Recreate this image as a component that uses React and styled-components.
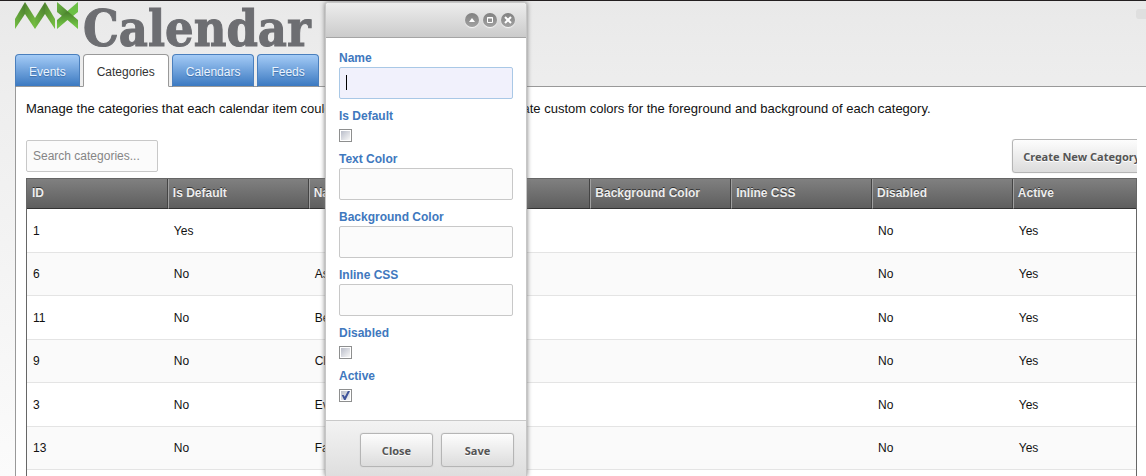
import React from "react";
import styled, { createGlobalStyle, css } from "styled-components";

const GlobalStyle = createGlobalStyle`
  *, *::before, *::after { box-sizing: border-box; }
  body {
    margin: 0;
    font-family: "Liberation Sans", Arial, sans-serif;
    font-size: 12px;
    color: #111;
  }
`;

const Page = styled.div`
  position: relative;
  display: flex;
  flex-direction: column;
  height: 100vh;
  padding-left: 15px;
  overflow: hidden;
  border-top: 1px solid #231f20;
  background: linear-gradient(#e9e9e9, #eeeeee 20%, #fbfbfb);
`;

const Brand = styled.header`
  display: flex;
  align-items: flex-start;
  gap: 4px;
  height: 53px;
`;

const BrandMark = styled.svg`
  display: block;
  flex: none;
`;

const BrandName = styled.h1`
  margin: 0;
  font: bold 50px/56px "DejaVu Serif Condensed", "DejaVu Serif", serif;
  color: #6d6e72;
  -webkit-text-stroke: 1px #6d6e72;
`;

const ToolbarNub = styled.span`
  margin: 8px 0 0 auto;
  width: 10px;
  height: 10px;
  border-radius: 3px 0 0 3px;
  background: #dfdfdf;
`;

const Tabs = styled.nav`
  display: flex;
  gap: 3px;
  margin-bottom: -1px;
  position: relative;
`;

const Tab = styled.a`
  height: 33px;
  padding: 0 13px;
  border: 1px solid #4a7fbd;
  border-bottom-color: #999;
  border-radius: 4px 4px 0 0;
  background: linear-gradient(#a4cbf6, #3b79c1);
  color: #eaf4ff;
  font-size: 12px;
  line-height: 34px;
  text-align: center;
  text-decoration: none;
  text-shadow: 0 1px 1px #3c6ea9;
  ${(p) =>
    p.$active &&
    css`
      border-color: #999;
      border-bottom-color: #fff;
      background: #fff;
      color: #333;
      text-shadow: none;
    `}
`;

const Panel = styled.main`
  display: flex;
  flex: 1;
  flex-direction: column;
  padding: 14px 9px 0 10px;
  border: solid #999;
  border-width: 1px 0 0 1px;
  background: #fff;
`;

const Intro = styled.p`
  margin: 0;
  font-size: 13px;
  line-height: 16px;
  white-space: nowrap;
`;

const ActionBar = styled.div`
  display: flex;
  align-items: flex-start;
  justify-content: space-between;
  height: 39px;
  margin-top: 22px;
  overflow: hidden;
`;

const TextBox = styled.input`
  display: block;
  width: 100%;
  height: 32px;
  padding: 0 6px;
  border: 1px solid ${(p) => (p.$active ? "#a9c8e6" : "#c8c8c8")};
  border-radius: 2px;
  outline: none;
  background: ${(p) => (p.$active ? "#f1f1fc" : "#fbfbfb")};
  font: 12px "Liberation Sans", Arial, sans-serif;
  &::placeholder { color: #858585; opacity: 1; }
`;

const SearchBox = styled(TextBox)`
  width: 132px;
  margin-top: 1px;
`;

const Button = styled.button`
  flex: none;
  height: 34px;
  min-width: 73px;
  padding: 0 10px;
  border: 1px solid #b5b5b5;
  border-radius: 3px;
  background: linear-gradient(#fdfdfd, #dcdcdc);
  box-shadow: 0 0 1px #bbb;
  color: #555;
  font: bold 11px "Noto Sans", sans-serif;
  text-shadow: 0 1px 0 #fff;
`;

const CreateButton = styled(Button)`
  margin-right: -14px;
`;

const TableFrame = styled.div`
  flex: 1;
  border: solid #666;
  border-width: 1px 1px 0;
`;

const Table = styled.table`
  width: 100%;
  table-layout: fixed;
  border-collapse: separate;
  border-spacing: 0;
`;

const HeadCell = styled.th`
  width: ${(p) => (p.$last ? "auto" : "12.7%")};
  height: 30px;
  padding: 0 0 2px 5px;
  border-bottom: 1px solid #333;
  background: linear-gradient(#808080, #5e5e5e);
  box-shadow: ${(p) => (p.$last ? "none" : "inset -1px 0 #444")};
  color: #eee;
  font-size: 12px;
  text-align: left;
  text-shadow: 0 -1px 0 #333;
  white-space: nowrap;
  & + & { padding-left: 4px; border-left: 1px solid #a0a0a0; }
`;

const Row = styled.tr`
  height: 44px;
  &:nth-child(even) { height: 43px; background: #fafafa; }
`;

const Cell = styled.td`
  padding: 0 0 0 6px;
  border-bottom: 1px solid #e4e4e4;
  font-size: 12px;
  white-space: nowrap;
`;

const Dialog = styled.section`
  position: absolute;
  top: 1px;
  bottom: 0;
  left: 325px;
  display: flex;
  flex-direction: column;
  width: 202px;
  border: 1px solid #c6c6c6;
  border-bottom: 0;
  border-radius: 3px 3px 0 0;
  background: #fff;
  box-shadow: 0 0 5px #777;
`;

const DialogBar = styled.div`
  display: flex;
  align-items: center;
  justify-content: flex-end;
  gap: 4px;
  height: 35px;
  padding: 0 11px 0 0;
  border-bottom: 1px solid #a5a5a5;
  border-radius: 3px 3px 0 0;
  background: linear-gradient(#ededed, #cbcbcb);
`;

const WindowButton = styled.button`
  width: 14px;
  height: 14px;
  padding: 0;
  border: 0;
  border-radius: 50%;
  background: linear-gradient(#818181, #a2a2a2);
  box-shadow: 0 1px 1px #f7f7f7;
  & svg { display: block; }
`;

const Form = styled.form`
  flex: 1;
  padding: 12px 13px 0;
`;

const Field = styled.div`
  position: relative;
  padding-bottom: 9px;
`;

const CheckField = styled.div`
  padding-bottom: 9px;
`;

const Label = styled.label`
  display: block;
  height: 17px;
  color: #4078be;
  font-size: 12px;
  font-weight: bold;
  line-height: 16px;
`;

const Caret = styled.span`
  position: absolute;
  top: 25px;
  left: 7px;
  width: 1px;
  height: 15px;
  background: #000;
`;

const CheckBox = styled.input`
  display: block;
  position: relative;
  appearance: none;
  width: 13px;
  height: 13px;
  margin: 4px 0 0;
  border: 1px solid #8e8f8f;
  background: linear-gradient(135deg, #b9bdc9, #f8f8f8) content-box #f4f4f4;
  padding: 1px;
  &:checked::after {
    content: "";
    position: absolute;
    inset: 1px;
    background: #3f549b;
    clip-path: polygon(8% 45%, 30% 45%, 42% 65%, 76% 0, 100% 0, 50% 100%, 34% 100%);
  }
`;

const DialogFooter = styled.footer`
  display: flex;
  justify-content: flex-end;
  gap: 8px;
  height: 56px;
  padding: 12px 12px 0;
  border-top: 1px solid #c9c9c9;
  background: linear-gradient(#f3f3f3, #dedede);
`;

const TABS = ["Events", "Categories", "Calendars", "Feeds"];

const COLUMNS = [
  "ID",
  "Is Default",
  "Name",
  "Text Color",
  "Background Color",
  "Inline CSS",
  "Disabled",
  "Active",
];

const ROWS = [
  ["1", "Yes", ""],
  ["6", "No", "Assembly"],
  ["11", "No", "Benefit"],
  ["9", "No", "Club"],
  ["3", "No", "Event"],
  ["13", "No", "Family"],
];

const FIELDS = [
  { id: "name", label: "Name", focused: true },
  { id: "is-default", label: "Is Default", check: true },
  { id: "text-color", label: "Text Color" },
  { id: "background-color", label: "Background Color" },
  { id: "inline-css", label: "Inline CSS" },
  { id: "disabled", label: "Disabled", check: true },
  { id: "active", label: "Active", check: true, checked: true },
];

function Mark() {
  return (
    <BrandMark width="64" height="30" viewBox="0 0 64 30" aria-hidden="true">
      <defs>
        <linearGradient id="up" x1="0" y1="1" x2="0.6" y2="0">
          <stop offset="0" stopColor="#74c043" />
          <stop offset="1" stopColor="#4f8430" />
        </linearGradient>
        <linearGradient id="down" x1="0" y1="0" x2="0.6" y2="1">
          <stop offset="0" stopColor="#4f8430" />
          <stop offset="1" stopColor="#74bb41" />
        </linearGradient>
        <linearGradient id="wing" x1="0" y1="0" x2="1" y2="0.8">
          <stop offset="0" stopColor="#6cb545" />
          <stop offset="1" stopColor="#4c852e" />
        </linearGradient>
        <linearGradient id="cross" x1="0" y1="0" x2="0" y2="1">
          <stop offset="0.1" stopColor="#4c852e" />
          <stop offset="0.8" stopColor="#70c244" />
        </linearGradient>
      </defs>
      <path d="M0 18 L10 1 V13 L0 28Z" fill="url(#up)" />
      <path d="M10 1 L20 17 V28 L10 13Z" fill="url(#down)" />
      <path d="M20 17 L30 1 V13 L20 28Z" fill="url(#up)" />
      <path d="M30 1 L40 18 V28 L30 13Z" fill="url(#down)" />
      <path d="M42 1 L52.500 10 V19 L47 15 L42 11Z" fill="url(#wing)" />
      <path d="M63 1 L52.500 10 V19 L58 15 L63 11Z" fill="#6cc046" />
      <path d="M52.500 10 L63 19 V28 L52.500 19 L42 28 V19Z" fill="url(#cross)" />
    </BrandMark>
  );
}

function Icon({ children }) {
  return (
    <svg width="14" height="14" viewBox="0 0 14 14" fill="none" stroke="#fff" aria-hidden="true">
      {children}
    </svg>
  );
}

function FormField({ id, label, check, checked, focused }) {
  if (check) {
    return (
      <CheckField>
        <Label htmlFor={id}>{label}</Label>
        <CheckBox id={id} type="checkbox" defaultChecked={checked} />
      </CheckField>
    );
  }
  return (
    <Field>
      <Label htmlFor={id}>{label}</Label>
      <TextBox id={id} type="text" $active={focused} />
      {focused && <Caret />}
    </Field>
  );
}

export default function App() {
  return (
    <Page>
      <GlobalStyle />
      <Brand>
        <Mark />
        <BrandName>Calendar</BrandName>
        <ToolbarNub />
      </Brand>
      <Tabs>
        {TABS.map((tab) => (
          <Tab key={tab} href="#" $active={tab === "Categories"}>
            {tab}
          </Tab>
        ))}
      </Tabs>
      <Panel>
        <Intro>
          Manage the categories that each calendar item could be assigned to. You can also create
          custom colors for the foreground and background of each category.
        </Intro>
        <ActionBar>
          <SearchBox type="text" placeholder="Search categories..." aria-label="Search categories" />
          <CreateButton type="button">Create New Category</CreateButton>
        </ActionBar>
        <TableFrame>
          <Table>
            <thead>
              <tr>
                {COLUMNS.map((name, i) => (
                  <HeadCell key={name} $last={i === COLUMNS.length - 1}>
                    {name}
                  </HeadCell>
                ))}
              </tr>
            </thead>
            <tbody>
              {ROWS.map(([id, isDefault, name]) => (
                <Row key={id}>
                  <Cell>{id}</Cell>
                  <Cell>{isDefault}</Cell>
                  <Cell>{name}</Cell>
                  <Cell />
                  <Cell />
                  <Cell />
                  <Cell>No</Cell>
                  <Cell>Yes</Cell>
                </Row>
              ))}
            </tbody>
          </Table>
        </TableFrame>
      </Panel>
      <Dialog role="dialog" aria-label="Category">
        <DialogBar>
          <WindowButton type="button" aria-label="Collapse">
            <Icon>
              <path d="M4 9 L7 5 L10 9Z" fill="#fff" stroke="none" />
            </Icon>
          </WindowButton>
          <WindowButton type="button" aria-label="Maximize">
            <Icon>
              <path d="M4.500 4.500 H9.500 V9.500 H4.500Z M4 5 H10" />
            </Icon>
          </WindowButton>
          <WindowButton type="button" aria-label="Dismiss">
            <Icon>
              <path d="M4 4 L10 10 M10 4 L4 10" strokeWidth="2" />
            </Icon>
          </WindowButton>
        </DialogBar>
        <Form>
          {FIELDS.map((field) => (
            <FormField key={field.id} {...field} />
          ))}
        </Form>
        <DialogFooter>
          <Button type="button">Close</Button>
          <Button type="button">Save</Button>
        </DialogFooter>
      </Dialog>
    </Page>
  );
}
